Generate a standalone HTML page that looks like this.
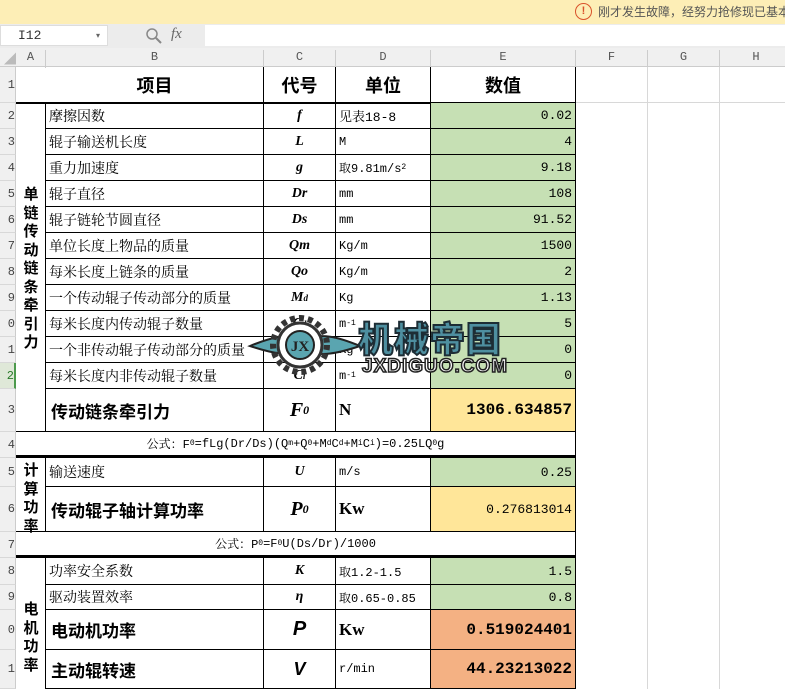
<!DOCTYPE html><html><head><meta charset="utf-8"><style>
*{margin:0;padding:0;box-sizing:border-box}
body{width:785px;height:689px;overflow:hidden;background:#fff;position:relative;font-family:"Liberation Serif","Noto Serif CJK SC","Noto Sans CJK SC",serif;color:#000}
.a{position:absolute}
.c{position:absolute;border-right:1px solid #000;border-bottom:1px solid #000;display:flex;align-items:center;font-size:13px;white-space:nowrap;overflow:hidden}
.g{background:#c6e0b4}.y{background:#ffe699}.o{background:#f4b183}
.r{justify-content:flex-end;padding-right:3px;font-family:"Liberation Mono","Noto Sans CJK SC",monospace}
.m{justify-content:center}
.l{padding-left:3px}
.sym{font-family:"Liberation Serif",serif;font-weight:bold;font-style:italic;font-size:14px}
.big{font-size:17px;font-weight:bold;font-family:"Noto Sans CJK SC",sans-serif}
.k{font-family:"Noto Serif CJK SC","Noto Sans CJK SC",serif;font-size:14px}
.mono{font-family:"Liberation Mono","Noto Serif CJK SC",monospace;font-size:12px}
.rh{position:absolute;left:0;width:16px;background:#f0f0f0;border-right:1px solid #ccc;border-bottom:1px solid #d8d8d8;font-size:12px;color:#444;overflow:hidden;display:flex;align-items:center;justify-content:flex-end;font-family:"Liberation Mono",monospace}
.v{position:absolute;font-family:"Noto Sans CJK SC",sans-serif;font-weight:bold;font-size:15px;line-height:18.5px;width:20px;text-align:center}
.bn{font-family:"Liberation Mono",monospace;font-size:17px;font-weight:bold}
</style></head><body>
<div class="a" style="left:0;top:0;width:785px;height:24px;background:#fdeeb6"></div>
<div class="a" style="left:575px;top:3px;width:17px;height:17px;border:1.5px solid #d9532b;border-radius:50%;color:#d9532b;font:bold 11px 'Liberation Sans';text-align:center;line-height:14px">!</div>
<div class="a k" style="left:598px;top:3px;font-size:12px;color:#555;white-space:nowrap;font-family:'Noto Sans CJK SC',sans-serif">刚才发生故障，经努力抢修现已基本</div>
<div class="a" style="left:0;top:24px;width:785px;height:24px;background:#ececec"></div>
<div class="a" style="left:0;top:25px;width:108px;height:21px;background:#fff;border:1px solid #ddd"></div>
<div class="a mono" style="left:18px;top:28px;font-size:13px;color:#333">I12</div>
<div class="a" style="left:96px;top:31px;font-size:8px;color:#666">▾</div>
<svg class="a" style="left:145px;top:27px" width="18" height="18"><circle cx="7" cy="7" r="5" fill="none" stroke="#888" stroke-width="1.5"/><path d="M11 11 L16 16" stroke="#888" stroke-width="2"/></svg>
<div class="a" style="left:171px;top:26px;font:italic 15px 'Liberation Serif';color:#666">fx</div>
<div class="a" style="left:205px;top:25px;width:580px;height:21px;background:#fff"></div>
<div class="a" style="left:0;top:48px;width:785px;height:19px;background:#f0f0f0;border-bottom:1px solid #ccc"></div>
<div class="a mono" style="left:0;top:48px;width:785px;height:19px;font-size:12px;color:#555">
<span class="a" style="left:4px;top:2px;color:#bbb">◢</span>
<span class="a" style="left:16px;width:30px;text-align:center;top:2px;border-right:1px solid #ccc;height:18px">A</span>
<span class="a" style="left:46px;width:218px;text-align:center;top:2px;border-right:1px solid #ccc;height:18px">B</span>
<span class="a" style="left:264px;width:72px;text-align:center;top:2px;border-right:1px solid #ccc;height:18px">C</span>
<span class="a" style="left:336px;width:95px;text-align:center;top:2px;border-right:1px solid #ccc;height:18px">D</span>
<span class="a" style="left:431px;width:145px;text-align:center;top:2px;border-right:1px solid #ccc;height:18px">E</span>
<span class="a" style="left:576px;width:72px;text-align:center;top:2px;border-right:1px solid #ccc;height:18px">F</span>
<span class="a" style="left:648px;width:72px;text-align:center;top:2px;border-right:1px solid #ccc;height:18px">G</span>
<span class="a" style="left:720px;width:72px;text-align:center;top:2px">H</span>
</div>
<div class="rh" style="top:67px;height:36px">1</div>
<div class="rh" style="top:103px;height:26px">2</div><div class="rh" style="top:129px;height:26px">3</div><div class="rh" style="top:155px;height:26px">4</div><div class="rh" style="top:181px;height:26px">5</div><div class="rh" style="top:207px;height:26px">6</div><div class="rh" style="top:233px;height:26px">7</div><div class="rh" style="top:259px;height:26px">8</div><div class="rh" style="top:285px;height:26px">9</div><div class="rh" style="top:311px;height:26px">0</div><div class="rh" style="top:337px;height:26px">1</div><div class="rh" style="top:363px;height:26px;background:#dfe8d8;color:#2a7a2a;border-right:2px solid #4c9a4c">2</div>
<div class="rh" style="top:389px;height:43px">3</div><div class="rh" style="top:432px;height:26px">4</div><div class="rh" style="top:458px;height:29px">5</div><div class="rh" style="top:487px;height:45px">6</div><div class="rh" style="top:532px;height:26px">7</div><div class="rh" style="top:558px;height:27px">8</div><div class="rh" style="top:585px;height:25px">9</div><div class="rh" style="top:610px;height:40px">0</div><div class="rh" style="top:650px;height:39px">1</div>
<div class="a" style="left:576px;top:67px;width:209px;height:622px;background:repeating-linear-gradient(90deg,transparent 0 71px,#d8d8d8 71px 72px)"></div>
<div class="a" style="left:576px;top:102px;width:209px;height:1px;background:#d8d8d8"></div>
<div class="c m big" style="left:46px;top:67px;width:218px;height:36px;font-size:18px">项目</div>
<div class="c m big" style="left:264px;top:67px;width:72px;height:36px;font-size:18px">代号</div>
<div class="c m big" style="left:336px;top:67px;width:95px;height:36px;font-size:18px">单位</div>
<div class="c m big" style="left:431px;top:67px;width:145px;height:36px;font-size:18px">数值</div>
<div class="a" style="left:16px;top:102px;width:560px;height:2px;background:#000"></div>
<div class="a" style="left:16px;top:103px;width:30px;height:329px;border-right:1px solid #000;border-bottom:1px solid #000"></div>
<div class="v" style="left:21px;top:185px">单链传动链条牵引力</div>
<div class="a" style="left:46px;top:103px">
<div class="c l k" style="left:0;top:0;width:218px;height:26px">摩擦因数</div>
<div class="c l k" style="left:0;top:26px;width:218px;height:26px">辊子输送机长度</div>
<div class="c l k" style="left:0;top:52px;width:218px;height:26px">重力加速度</div>
<div class="c l k" style="left:0;top:78px;width:218px;height:26px">辊子直径</div>
<div class="c l k" style="left:0;top:104px;width:218px;height:26px">辊子链轮节圆直径</div>
<div class="c l k" style="left:0;top:130px;width:218px;height:26px">单位长度上物品的质量</div>
<div class="c l k" style="left:0;top:156px;width:218px;height:26px">每米长度上链条的质量</div>
<div class="c l k" style="left:0;top:182px;width:218px;height:26px">一个传动辊子传动部分的质量</div>
<div class="c l k" style="left:0;top:208px;width:218px;height:26px">每米长度内传动辊子数量</div>
<div class="c l k" style="left:0;top:234px;width:218px;height:26px">一个非传动辊子传动部分的质量</div>
<div class="c l k" style="left:0;top:260px;width:218px;height:26px">每米长度内非传动辊子数量</div>
<div class="c m sym" style="left:218px;top:0;width:72px;height:26px">f</div>
<div class="c m sym" style="left:218px;top:26px;width:72px;height:26px">L</div>
<div class="c m sym" style="left:218px;top:52px;width:72px;height:26px">g</div>
<div class="c m sym" style="left:218px;top:78px;width:72px;height:26px">Dr</div>
<div class="c m sym" style="left:218px;top:104px;width:72px;height:26px">Ds</div>
<div class="c m sym" style="left:218px;top:130px;width:72px;height:26px">Qm</div>
<div class="c m sym" style="left:218px;top:156px;width:72px;height:26px">Qo</div>
<div class="c m sym" style="left:218px;top:182px;width:72px;height:26px">M<sub style="font-size:9px">d</sub></div>
<div class="c m sym" style="left:218px;top:208px;width:72px;height:26px">C<sub style="font-size:9px">d</sub></div>
<div class="c m sym" style="left:218px;top:234px;width:72px;height:26px">M<sub style="font-size:9px">i</sub></div>
<div class="c m sym" style="left:218px;top:260px;width:72px;height:26px">C<sub style="font-size:9px">i</sub></div>
<div class="c l mono" style="left:290px;top:0;width:95px;height:26px;font-size:13px">见表18-8</div>
<div class="c l mono" style="left:290px;top:26px;width:95px;height:26px">M</div>
<div class="c l mono" style="left:290px;top:52px;width:95px;height:26px">取9.81m/s<sup style="font-size:8px">2</sup></div>
<div class="c l mono" style="left:290px;top:78px;width:95px;height:26px">mm</div>
<div class="c l mono" style="left:290px;top:104px;width:95px;height:26px">mm</div>
<div class="c l mono" style="left:290px;top:130px;width:95px;height:26px">Kg/m</div>
<div class="c l mono" style="left:290px;top:156px;width:95px;height:26px">Kg/m</div>
<div class="c l mono" style="left:290px;top:182px;width:95px;height:26px">Kg</div>
<div class="c l mono" style="left:290px;top:208px;width:95px;height:26px">m<sup style="font-size:8px">-1</sup></div>
<div class="c l mono" style="left:290px;top:234px;width:95px;height:26px">Kg</div>
<div class="c l mono" style="left:290px;top:260px;width:95px;height:26px">m<sup style="font-size:8px">-1</sup></div>
<div class="c r g" style="left:385px;top:0;width:145px;height:26px">0.02</div>
<div class="c r g" style="left:385px;top:26px;width:145px;height:26px">4</div>
<div class="c r g" style="left:385px;top:52px;width:145px;height:26px">9.18</div>
<div class="c r g" style="left:385px;top:78px;width:145px;height:26px">108</div>
<div class="c r g" style="left:385px;top:104px;width:145px;height:26px">91.52</div>
<div class="c r g" style="left:385px;top:130px;width:145px;height:26px">1500</div>
<div class="c r g" style="left:385px;top:156px;width:145px;height:26px">2</div>
<div class="c r g" style="left:385px;top:182px;width:145px;height:26px">1.13</div>
<div class="c r g" style="left:385px;top:208px;width:145px;height:26px">5</div>
<div class="c r g" style="left:385px;top:234px;width:145px;height:26px">0</div>
<div class="c r g" style="left:385px;top:260px;width:145px;height:26px">0</div>
</div>
<div class="c l big" style="left:46px;top:389px;width:218px;height:43px;padding-left:5px">传动链条牵引力</div>
<div class="c m sym" style="left:264px;top:389px;width:72px;height:43px;font-size:20px">F<sub style="font-size:12px">0</sub></div>
<div class="c l" style="left:336px;top:389px;width:95px;height:43px;font-size:17px;font-weight:bold">N</div>
<div class="c r y bn" style="left:431px;top:389px;width:145px;height:43px;font-size:16px">1306.634857</div>
<div class="c m mono" style="left:16px;top:432px;width:560px;height:26px;border-bottom:3px solid #000">公式：F<sub style="font-size:8px">0</sub>=fLg(Dr/Ds)(Q<sub style="font-size:8px">m</sub>+Q<sub style="font-size:8px">0</sub>+M<sub style="font-size:8px">d</sub>C<sub style="font-size:8px">d</sub>+M<sub style="font-size:8px">i</sub>C<sub style="font-size:8px">i</sub>)=0.25LQ<sub style="font-size:8px">0</sub>g</div>
<div class="a" style="left:16px;top:458px;width:30px;height:74px;border-right:1px solid #000;border-bottom:1px solid #000"></div>
<div class="v" style="left:21px;top:461px">计算功率</div>
<div class="c l k" style="left:46px;top:458px;width:218px;height:29px">输送速度</div>
<div class="c m sym" style="left:264px;top:458px;width:72px;height:29px">U</div>
<div class="c l mono" style="left:336px;top:458px;width:95px;height:29px">m/s</div>
<div class="c r g" style="left:431px;top:458px;width:145px;height:29px">0.25</div>
<div class="c l big" style="left:46px;top:487px;width:218px;height:45px;padding-left:5px">传动辊子轴计算功率</div>
<div class="c m sym" style="left:264px;top:487px;width:72px;height:45px;font-size:20px">P<sub style="font-size:12px">0</sub></div>
<div class="c l" style="left:336px;top:487px;width:95px;height:45px;font-size:17px;font-weight:bold">Kw</div>
<div class="c r y" style="left:431px;top:487px;width:145px;height:45px">0.276813014</div>
<div class="c m mono" style="left:16px;top:532px;width:560px;height:26px;border-bottom:3px solid #000">公式：P<sub style="font-size:8px">0</sub>=F<sub style="font-size:8px">0</sub>U(Ds/Dr)/1000</div>
<div class="a" style="left:16px;top:558px;width:30px;height:131px;border-right:1px solid #000"></div>
<div class="v" style="left:21px;top:600px">电机功率</div>
<div class="c l k" style="left:46px;top:558px;width:218px;height:27px">功率安全系数</div>
<div class="c m sym" style="left:264px;top:558px;width:72px;height:27px">K</div>
<div class="c l mono" style="left:336px;top:558px;width:95px;height:27px">取1.2-1.5</div>
<div class="c r g" style="left:431px;top:558px;width:145px;height:27px">1.5</div>
<div class="c l k" style="left:46px;top:585px;width:218px;height:25px">驱动装置效率</div>
<div class="c m sym" style="left:264px;top:585px;width:72px;height:25px">η</div>
<div class="c l mono" style="left:336px;top:585px;width:95px;height:25px">取0.65-0.85</div>
<div class="c r g" style="left:431px;top:585px;width:145px;height:25px">0.8</div>
<div class="c l big" style="left:46px;top:610px;width:218px;height:40px;padding-left:5px">电动机功率</div>
<div class="c m sym" style="left:264px;top:610px;width:72px;height:40px;font-size:20px;font-family:'Liberation Sans'">P</div>
<div class="c l" style="left:336px;top:610px;width:95px;height:40px;font-size:17px;font-weight:bold">Kw</div>
<div class="c r o bn" style="left:431px;top:610px;width:145px;height:40px;font-size:16px">0.519024401</div>
<div class="c l big" style="left:46px;top:650px;width:218px;height:39px;padding-left:5px">主动辊转速</div>
<div class="c m sym" style="left:264px;top:650px;width:72px;height:39px;font-size:18px;font-family:'Liberation Sans'">V</div>
<div class="c l mono" style="left:336px;top:650px;width:95px;height:39px">r/min</div>
<div class="c r o bn" style="left:431px;top:650px;width:145px;height:39px;font-size:16px">44.23213022</div>
<svg class="a" style="left:244px;top:310px" width="300" height="76" viewBox="0 0 300 76">
<path d="M6 36 C30 26 45 24 60 28 L66 36 L60 42 C45 46 30 44 6 36Z" fill="#5aa5b0" stroke="#222" stroke-width="2"/>
<path d="M110 36 C86 26 72 24 58 28 L52 36 L58 42 C72 46 86 44 110 36Z" transform="translate(6 0)" fill="#5aa5b0" stroke="#222" stroke-width="2"/>
<circle cx="56" cy="35" r="27" fill="none" stroke="#333" stroke-width="6" stroke-dasharray="5 4"/>
<circle cx="56" cy="35" r="22" fill="#fff" stroke="#333" stroke-width="3"/>
<circle cx="56" cy="35" r="14" fill="#5aa5b0" stroke="#222" stroke-width="2"/>
<text x="56" y="41" text-anchor="middle" font-family="Liberation Serif" font-weight="bold" font-size="15" fill="#222">JX</text>
<text x="114" y="42" font-family="Noto Sans CJK SC" font-weight="900" font-size="35" fill="#4e8fa0" stroke="#1d2d35" stroke-width="2" letter-spacing="1">机械帝国</text>
<text x="118" y="62" font-family="Liberation Sans" font-weight="bold" font-size="19" fill="#fff" stroke="#222" stroke-width="1.5" letter-spacing="1">JXDIGUO.COM</text>
</svg>
</body></html>
